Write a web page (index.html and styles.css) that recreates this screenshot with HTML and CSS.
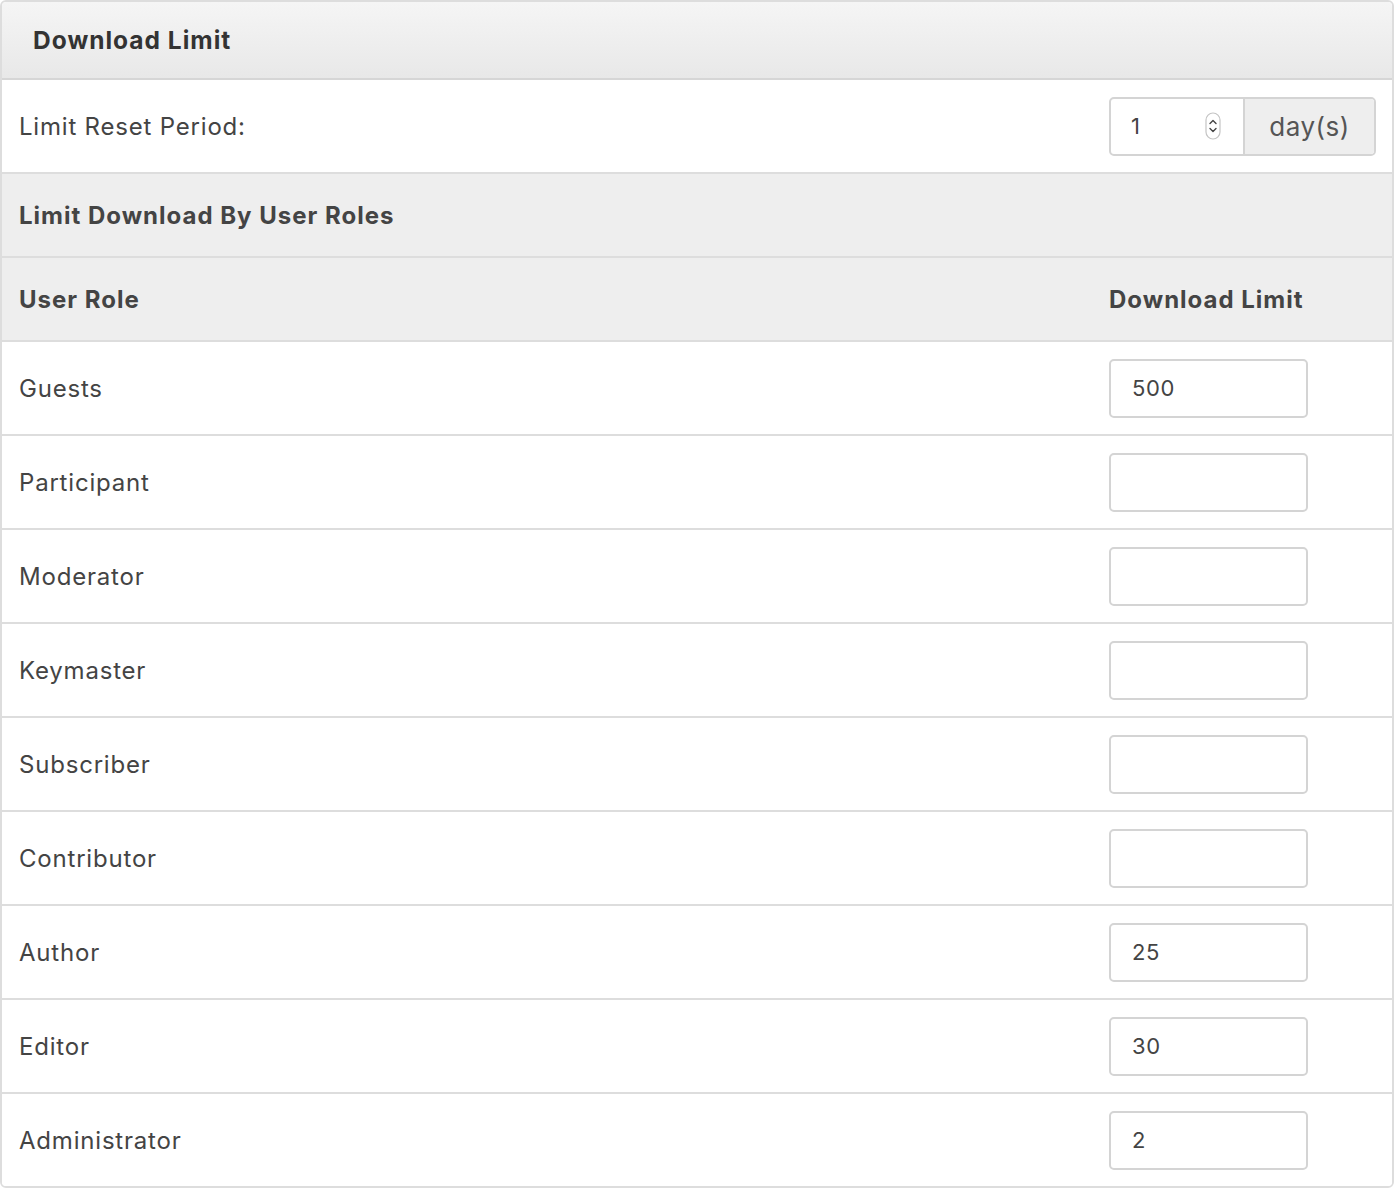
FILE: index.html
```html
<!DOCTYPE html>
<html>
<head>
<meta charset="utf-8">
<link rel="stylesheet" href="styles.css">
</head>
<body>
<div class="panel">
  <div class="panel-head">Download Limit</div>
  <div class="row row-input">
    <div class="label">Limit Reset Period:</div>
    <div class="period">
      <div class="num-field">
        <span class="num-val">1</span>
        <svg class="spin" width="16" height="28" viewBox="0 0 16 28">
          <rect x="1" y="1" width="14" height="26" rx="7" fill="#fff" stroke="#c4c4c4" stroke-width="1.2"/>
          <path d="M5 11.5 L8 8.5 L11 11.5" fill="none" stroke="#444" stroke-width="1.4" stroke-linecap="round" stroke-linejoin="round"/>
          <path d="M5 16.5 L8 19.5 L11 16.5" fill="none" stroke="#444" stroke-width="1.4" stroke-linecap="round" stroke-linejoin="round"/>
        </svg>
      </div>
      <div class="addon">day(s)</div>
    </div>
  </div>
  <div class="row row-head"><div class="label bold">Limit Download By User Roles</div></div>
  <div class="row row-head">
    <div class="label bold">User Role</div>
    <div class="col2 bold">Download Limit</div>
  </div>
  <div class="row row-input"><div class="label">Guests</div><div class="col2"><div class="box">500</div></div></div>
  <div class="row row-input"><div class="label">Participant</div><div class="col2"><div class="box"></div></div></div>
  <div class="row row-input"><div class="label">Moderator</div><div class="col2"><div class="box"></div></div></div>
  <div class="row row-input"><div class="label">Keymaster</div><div class="col2"><div class="box"></div></div></div>
  <div class="row row-input"><div class="label">Subscriber</div><div class="col2"><div class="box"></div></div></div>
  <div class="row row-input"><div class="label">Contributor</div><div class="col2"><div class="box"></div></div></div>
  <div class="row row-input"><div class="label">Author</div><div class="col2"><div class="box">25</div></div></div>
  <div class="row row-input"><div class="label">Editor</div><div class="col2"><div class="box">30</div></div></div>
  <div class="row row-input last"><div class="label">Administrator</div><div class="col2"><div class="box">2</div></div></div>
</div>
</body>
</html>
```

FILE: styles.css
```css
* { box-sizing: border-box; }
html, body { margin: 0; padding: 0; background: #fff; }
body {
  font-family: Inter, "Noto Sans", "Liberation Sans", sans-serif;
  color: #444;
  width: 1395px;
}
.panel {
  width: 1394px;
  height: 1188px;
  border: 2px solid #dddddd;
  border-radius: 6px;
  overflow: hidden;
}
.panel-head {
  height: 78px;
  padding-left: 31px;
  display: flex;
  align-items: center;
  font-size: 24.5px;
  letter-spacing: 1px;
  font-weight: 700;
  color: #333;
  background: linear-gradient(#f5f5f5, #e8e8e8);
  border-bottom: 2px solid #d6d6d6;
}
.row {
  display: flex;
  align-items: center;
  padding-left: 17px;
  border-bottom: 2px solid #dddddd;
  font-size: 24px;
  letter-spacing: 0.8px;
}
.row.last { border-bottom: none; height: 92px; }
.row-input { height: 94px; background: #fff; }
.row-head { height: 84px; background: #eeeeee; }
.label { width: 1090px; flex: none; }
.bold { font-weight: 700; letter-spacing: 1px; }
.col2 { flex: none; }
.box {
  width: 199px;
  height: 59px;
  border: 2px solid #d4d4d4;
  border-radius: 5px;
  padding-left: 21px;
  display: flex;
  align-items: center;
  font-size: 22px;
  letter-spacing: 0.6px;
  color: #444;
}
.period {
  display: flex;
  width: 267px;
  height: 59px;
  border: 2px solid #d4d4d4;
  border-radius: 5px;
  overflow: hidden;
}
.num-field {
  width: 134px;
  display: flex;
  align-items: center;
  padding-left: 20px;
  padding-right: 22px;
  justify-content: space-between;
  font-size: 22px;
  border-right: 2px solid #d4d4d4;
}
.addon {
  flex: 1;
  background: #eeeeee;
  display: flex;
  align-items: center;
  justify-content: center;
  font-size: 26px;
  letter-spacing: 0.5px;
  color: #555;
}
```
